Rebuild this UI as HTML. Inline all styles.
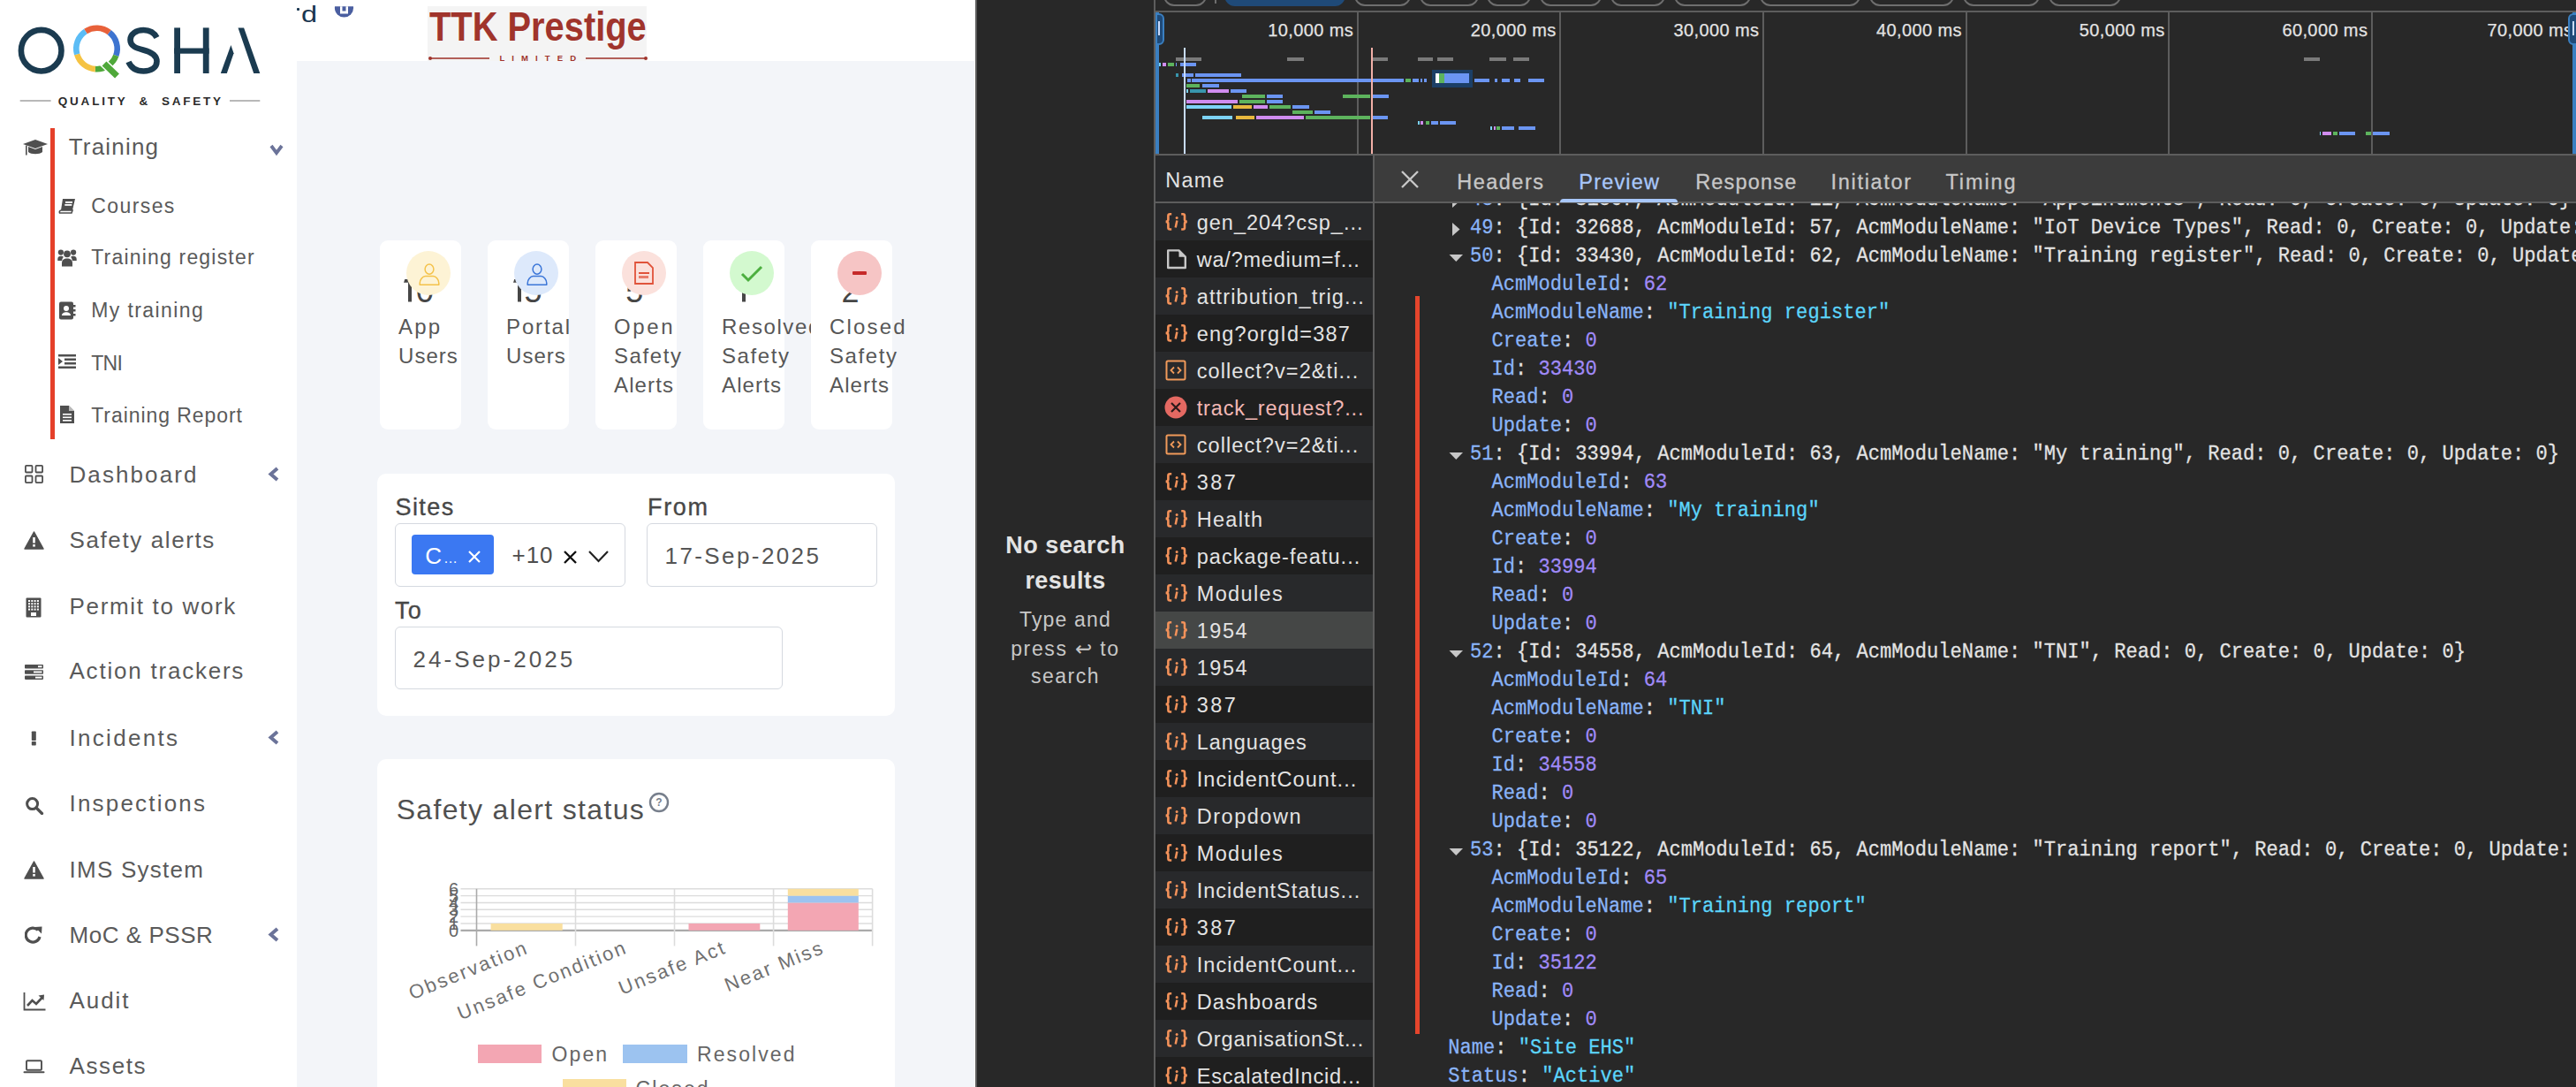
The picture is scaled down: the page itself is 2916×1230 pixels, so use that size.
<!DOCTYPE html>
<html><head><meta charset="utf-8">
<style>
*{margin:0;padding:0;box-sizing:border-box;}
html,body{width:2916px;height:1230px;overflow:hidden;background:#fff;}
body{position:relative;font-family:"Liberation Sans", sans-serif;}
.a{position:absolute;}
.t{position:absolute;white-space:nowrap;line-height:1;}
.side{color:#5a5a5a;font-size:26px;letter-spacing:1.6px;}
.sub{color:#5a5a5a;font-size:23px;letter-spacing:1.5px;}
.card{position:absolute;background:#fff;border-radius:9px;}
.mono{font-family:"Liberation Mono", monospace;font-size:22.08px;white-space:pre;line-height:1;position:absolute;color:#e3e3e3;-webkit-text-stroke:0.25px currentColor;transform:scaleY(1.07);transform-origin:0 76.65%;}
</style></head><body>

<svg class="a" style="left:0;top:0" width="336" height="130" viewBox="0 0 336 130">
<ellipse cx="46.7" cy="57.2" rx="22.8" ry="23.3" fill="none" stroke="#1b3b50" stroke-width="6.6"/>
<g fill="none" stroke-width="6.6"><path d="M 96.86 35.54 A 23.20 23.20 0 0 1 123.78 36.72" stroke="#e8613a"/><path d="M 123.78 36.72 A 23.20 23.20 0 0 1 131.30 62.93" stroke="#3d74d0"/><path d="M 131.30 62.93 A 23.20 23.20 0 0 1 107.88 78.14" stroke="#4fa83a"/><path d="M 107.88 78.14 A 23.20 23.20 0 0 1 87.20 61.39" stroke="#f5c343"/><path d="M 87.20 61.39 A 23.20 23.20 0 0 1 96.86 35.54" stroke="#5bbcf5"/></g>
<line x1="116.5" y1="70.5" x2="132.5" y2="86" stroke="#fff" stroke-width="10"/>
<line x1="118" y1="72" x2="132.5" y2="86" stroke="#4fa83a" stroke-width="7"/>
<path d="M 177.5 42.5 C 174 36, 168.5 34, 162.5 34 C 154 34, 147.5 38.5, 147.5 45 C 147.5 52, 154 54.5, 162 56.5 C 171 58.8, 177.5 62, 177.5 69.5 C 177.5 76.5, 171 80.5, 162.5 80.5 C 155 80.5, 148.5 77, 145.5 70" fill="none" stroke="#1b3b50" stroke-width="6.6"/>
<rect x="197.2" y="31.4" width="6.8" height="51.6" fill="#1b3b50"/>
<rect x="229.8" y="31.4" width="6.8" height="51.6" fill="#1b3b50"/>
<rect x="197.2" y="54.5" width="39.4" height="6.2" fill="#1b3b50"/>
<polygon points="269.5,31.4 276.1,31.4 294.3,83 287.2,83" fill="#1b3b50"/>
<polygon points="249.8,83 261.4,50.9 264.6,60.3 256.8,83" fill="#1b3b50"/>
<line x1="22.7" y1="114" x2="57.6" y2="114" stroke="#a0a0a0" stroke-width="1.6"/>
<line x1="260" y1="114" x2="294.3" y2="114" stroke="#a0a0a0" stroke-width="1.6"/>
</svg>
<div class="t" style="left:65.7px;top:107.8px;font-size:13.5px;font-weight:bold;color:#2a2a2a;letter-spacing:2.82px;">QUALITY</div>
<div class="t" style="left:157.5px;top:107.8px;font-size:13.5px;font-weight:bold;color:#2a2a2a;">&amp;</div>
<div class="t" style="left:183.0px;top:107.8px;font-size:13.5px;font-weight:bold;color:#2a2a2a;letter-spacing:2.76px;">SAFETY</div>
<div class="a" style="left:57px;top:145px;width:5px;height:352px;background:#e5402a;"></div>
<svg class="a" style="left:25.0px;top:156.0px" width="30" height="22" viewBox="0 0 30 22"><path d="M1 7 L15 2 L29 7 L15 12 Z" fill="#4f4f4f"/><path d="M7 10 L7 16 C10 19,20 19,23 16 L23 10 L15 13 Z" fill="#4f4f4f"/><rect x="4" y="8.5" width="1.6" height="11" fill="#4f4f4f"/></svg>
<div class="side t" style="left:77.7px;top:153.0px;font-size:26.0px;letter-spacing:1.20px;">Training</div>
<svg class="a" style="left:305.0px;top:162.0px" width="16" height="15" viewBox="0 0 16 15"><path d="M2 3 L8 11 L14 3" fill="none" stroke="#6b7399" stroke-width="3.8"/></svg>
<div class="sub t" style="left:103.2px;top:221.5px;font-size:23.0px;letter-spacing:1.42px;">Courses</div>
<div class="sub t" style="left:103.2px;top:280.2px;font-size:23.0px;letter-spacing:1.19px;">Training register</div>
<div class="sub t" style="left:103.2px;top:340.4px;font-size:23.0px;letter-spacing:1.41px;">My training</div>
<div class="sub t" style="left:103.2px;top:400.0px;font-size:23.0px;letter-spacing:-0.65px;">TNI</div>
<div class="sub t" style="left:103.2px;top:458.5px;font-size:23.0px;letter-spacing:0.94px;">Training Report</div>
<svg class="a" style="left:66.0px;top:224.0px" width="20" height="18" viewBox="0 0 20 18"><path d="M5 1 L19 1 L16 14 L3 14 Z" fill="#4f4f4f"/><path d="M1.5 17 L15 17 L16 14 L3 14 C1.5 14,1 16,1.5 17Z" fill="none" stroke="#4f4f4f" stroke-width="1.6"/><rect x="8" y="4" width="8" height="1.8" fill="#fff"/><rect x="7.3" y="7" width="8" height="1.8" fill="#fff"/></svg>
<svg class="a" style="left:65.0px;top:281.0px" width="22" height="21" viewBox="0 0 22 21"><circle cx="3.9" cy="4.6" r="3.1" fill="#4f4f4f"/><circle cx="18.1" cy="4.6" r="3.1" fill="#4f4f4f"/><circle cx="11" cy="6.3" r="3.9" fill="#4f4f4f"/><path d="M0.3 14 L0.3 12 C0.3 9.6,2 8.7,4 8.7 C5.4 8.7,6.4 9.1,7 9.8 C6 10.8,5.4 12,5.2 14 Z" fill="#4f4f4f"/><path d="M21.7 14 L21.7 12 C21.7 9.6,20 8.7,18 8.7 C16.6 8.7,15.6 9.1,15 9.8 C16 10.8,16.6 12,16.8 14 Z" fill="#4f4f4f"/><path d="M5 20.5 L5 16.5 C5 13,7.5 11.4,11 11.4 C14.5 11.4,17 13,17 16.5 L17 20.5 Z" fill="#4f4f4f"/></svg>
<svg class="a" style="left:66.0px;top:341.0px" width="20" height="21" viewBox="0 0 20 21"><rect x="1" y="0.5" width="16" height="20" rx="2" fill="#4f4f4f"/><rect x="17" y="4" width="2.5" height="2.5" fill="#4f4f4f"/><rect x="17" y="9" width="2.5" height="2.5" fill="#4f4f4f"/><rect x="17" y="14" width="2.5" height="2.5" fill="#4f4f4f"/><circle cx="9" cy="8" r="3" fill="#fff"/><path d="M4 16 C4 11,14 11,14 16 Z" fill="#fff"/></svg>
<svg class="a" style="left:65.0px;top:400.0px" width="22" height="18" viewBox="0 0 22 18"><rect x="1" y="1" width="20" height="2.5" fill="#4f4f4f"/><rect x="8" y="5.5" width="13" height="2.5" fill="#4f4f4f"/><rect x="8" y="10" width="13" height="2.5" fill="#4f4f4f"/><rect x="1" y="14.5" width="20" height="2.5" fill="#4f4f4f"/><path d="M1 5 L6 9 L1 13Z" fill="#4f4f4f"/></svg>
<svg class="a" style="left:67.0px;top:458.0px" width="18" height="22" viewBox="0 0 18 22"><path d="M1 1 L11 1 L17 7 L17 21 L1 21 Z" fill="#4f4f4f"/><path d="M11 1 L11 7 L17 7" fill="#fff" opacity="0.6"/><rect x="4" y="10" width="10" height="1.6" fill="#fff"/><rect x="4" y="13.5" width="10" height="1.6" fill="#fff"/><rect x="4" y="17" width="10" height="1.6" fill="#fff"/></svg>
<div class="side t" style="left:78.5px;top:524.4px;font-size:26.0px;letter-spacing:2.09px;">Dashboard</div>
<svg class="a" style="left:301.5px;top:528.4px" width="15" height="17" viewBox="0 0 15 17"><path d="M12 2 L4.5 8.5 L12 15" fill="none" stroke="#6b7399" stroke-width="4"/></svg>
<div class="side t" style="left:78.5px;top:598.2px;font-size:26.0px;letter-spacing:1.61px;">Safety alerts</div>
<div class="side t" style="left:78.5px;top:672.6px;font-size:26.0px;letter-spacing:1.67px;">Permit to work</div>
<div class="side t" style="left:78.5px;top:746.3px;font-size:26.0px;letter-spacing:1.78px;">Action trackers</div>
<div class="side t" style="left:78.5px;top:821.8px;font-size:26.0px;letter-spacing:2.30px;">Incidents</div>
<svg class="a" style="left:301.5px;top:825.8px" width="15" height="17" viewBox="0 0 15 17"><path d="M12 2 L4.5 8.5 L12 15" fill="none" stroke="#6b7399" stroke-width="4"/></svg>
<div class="side t" style="left:78.5px;top:895.8px;font-size:26.0px;letter-spacing:2.20px;">Inspections</div>
<div class="side t" style="left:78.5px;top:970.5px;font-size:26.0px;letter-spacing:1.26px;">IMS System</div>
<div class="side t" style="left:78.5px;top:1045.0px;font-size:26.0px;letter-spacing:0.54px;">MoC &amp; PSSR</div>
<svg class="a" style="left:301.5px;top:1049.0px" width="15" height="17" viewBox="0 0 15 17"><path d="M12 2 L4.5 8.5 L12 15" fill="none" stroke="#6b7399" stroke-width="4"/></svg>
<div class="side t" style="left:78.5px;top:1118.9px;font-size:26.0px;letter-spacing:1.95px;">Audit</div>
<div class="side t" style="left:78.5px;top:1193.2px;font-size:26.0px;letter-spacing:1.60px;">Assets</div>
<svg class="a" style="left:27.0px;top:525.0px" width="23" height="23" viewBox="0 0 23 23"><g fill="none" stroke="#4f4f4f" stroke-width="1.8"><rect x="1.9" y="1.9" width="7.6" height="7.6" rx="1"/><rect x="13.5" y="1.9" width="7.6" height="7.6" rx="1"/><rect x="1.9" y="13.5" width="7.6" height="7.6" rx="1"/><rect x="13.5" y="13.5" width="7.6" height="7.6" rx="1"/></g></svg>
<svg class="a" style="left:27.0px;top:600.5px" width="23" height="21" viewBox="0 0 23 21"><path d="M11.5 1 L22 20 L1 20 Z" fill="#4f4f4f" stroke="#4f4f4f" stroke-width="1.5" stroke-linejoin="round"/><rect x="10.2" y="7" width="2.6" height="6.5" fill="#fff"/><rect x="10.2" y="15" width="2.6" height="2.6" fill="#fff"/></svg>
<svg class="a" style="left:29.0px;top:676.0px" width="18" height="23" viewBox="0 0 18 23"><rect x="0.5" y="0.5" width="17" height="22" rx="1" fill="#4f4f4f"/><rect x="3" y="3" width="2" height="2" fill="#fff"/><rect x="3" y="6.2" width="2" height="2" fill="#fff"/><rect x="3" y="9.4" width="2" height="2" fill="#fff"/><rect x="3" y="12.6" width="2" height="2" fill="#fff"/><rect x="6.3" y="3" width="2" height="2" fill="#fff"/><rect x="6.3" y="6.2" width="2" height="2" fill="#fff"/><rect x="6.3" y="9.4" width="2" height="2" fill="#fff"/><rect x="6.3" y="12.6" width="2" height="2" fill="#fff"/><rect x="9.6" y="3" width="2" height="2" fill="#fff"/><rect x="9.6" y="6.2" width="2" height="2" fill="#fff"/><rect x="9.6" y="9.4" width="2" height="2" fill="#fff"/><rect x="9.6" y="12.6" width="2" height="2" fill="#fff"/><rect x="12.9" y="3" width="2" height="2" fill="#fff"/><rect x="12.9" y="6.2" width="2" height="2" fill="#fff"/><rect x="12.9" y="9.4" width="2" height="2" fill="#fff"/><rect x="12.9" y="12.6" width="2" height="2" fill="#fff"/><rect x="6" y="17" width="6" height="4" fill="#fff"/></svg>
<svg class="a" style="left:27.0px;top:751.0px" width="23" height="19" viewBox="0 0 23 19"><rect x="1" y="1" width="21" height="4.5" rx="0.8" fill="#4f4f4f"/><rect x="1" y="7.2" width="21" height="4.5" rx="0.8" fill="#4f4f4f"/><rect x="1" y="13.4" width="21" height="4.5" rx="0.8" fill="#4f4f4f"/><rect x="16" y="2.3" width="4.5" height="1.9" fill="#fff"/><rect x="11" y="8.5" width="9.5" height="1.9" fill="#fff"/><rect x="13" y="14.7" width="7.5" height="1.9" fill="#fff"/></svg>
<svg class="a" style="left:35.0px;top:827.0px" width="7" height="17" viewBox="0 0 7 17"><rect x="0.8" y="0.5" width="5" height="10.5" rx="0.8" fill="#4f4f4f"/><rect x="0.8" y="12" width="5" height="4.5" rx="0.8" fill="#4f4f4f"/></svg>
<svg class="a" style="left:28.0px;top:901.0px" width="22" height="21" viewBox="0 0 22 21"><circle cx="8.6" cy="8.6" r="6" fill="none" stroke="#4f4f4f" stroke-width="3"/><line x1="13" y1="13" x2="19.5" y2="19.5" stroke="#4f4f4f" stroke-width="3.2" stroke-linecap="round"/></svg>
<svg class="a" style="left:27.0px;top:973.5px" width="23" height="21" viewBox="0 0 23 21"><path d="M11.5 1 L22 20 L1 20 Z" fill="#4f4f4f" stroke="#4f4f4f" stroke-width="1.5" stroke-linejoin="round"/><rect x="10.2" y="7" width="2.6" height="6.5" fill="#fff"/><rect x="10.2" y="15" width="2.6" height="2.6" fill="#fff"/></svg>
<svg class="a" style="left:28.0px;top:1047.0px" width="21" height="23" viewBox="0 0 21 23"><path d="M17 13 A8 8 0 1 1 15 5.5" fill="none" stroke="#4f4f4f" stroke-width="3.2"/><path d="M11.5 2 L19.5 1.5 L19 9.5 Z" fill="#4f4f4f"/></svg>
<svg class="a" style="left:26.0px;top:1123.0px" width="26" height="21" viewBox="0 0 26 21"><path d="M1.5 0 L1.5 19.5 L25.5 19.5" fill="none" stroke="#4f4f4f" stroke-width="1.8"/><path d="M5 15 L10.5 9 L15 13 L22 5.5" fill="none" stroke="#4f4f4f" stroke-width="2.6"/><path d="M17.5 3.5 L24 2.5 L23.5 9 Z" fill="#4f4f4f"/></svg>
<svg class="a" style="left:26.0px;top:1199.0px" width="25" height="16" viewBox="0 0 25 16"><rect x="4" y="1.2" width="17" height="10.5" rx="1" fill="none" stroke="#4f4f4f" stroke-width="1.9"/><rect x="0.5" y="13.2" width="24" height="2" rx="1" fill="#4f4f4f"/></svg>
<div class="a" style="left:336px;top:0;width:767px;height:69px;background:#fff;"></div>
<div class="a" style="left:336px;top:69px;width:767px;height:1161px;background:#f3f5f9;"></div>
<div class="a" style="left:336px;top:9px;width:2.5px;height:3px;background:#1a3650;border-radius:1px;"></div>
<div class="t" style="left:340.5px;top:4.1px;font-size:25px;color:#1a3650;transform-origin:0 0;transform:scaleX(1.3);">d</div>
<svg class="a" style="left:376.0px;top:0.0px" width="28" height="22" viewBox="0 0 28 22"><defs><clipPath id="hc"><rect x="0" y="7.3" width="28" height="15"/></clipPath></defs><g clip-path="url(#hc)"><circle cx="13.5" cy="9" r="10.6" fill="#4a5ea0"/><path d="M9 7 L9 15.5 L18 15.5 L18 7 L15.5 7 L15.5 12.5 L11.5 12.5 L11.5 7 Z" fill="#fff"/></g></svg>
<div class="a" style="left:484px;top:7px;width:248px;height:62px;background:#f4f4f4;"></div>
<div class="t" style="left:486px;top:6.8px;font-size:46px;font-weight:bold;color:#a0342c;transform-origin:0 0;transform:scaleX(0.866);">TTK Prestige</div>
<div class="a" style="left:486.5px;top:65.3px;width:67px;height:1.4px;background:#b25f58;"></div>
<div class="a" style="left:662.6px;top:65.3px;width:68px;height:1.4px;background:#b25f58;"></div>
<div class="a" style="left:485px;top:64px;width:4px;height:4px;border-radius:2px;background:#a0342c;"></div>
<div class="a" style="left:728.5px;top:64px;width:4px;height:4px;border-radius:2px;background:#a0342c;"></div>
<div class="t" style="left:565.4px;top:61.4px;font-size:9.5px;font-weight:bold;color:#a0342c;letter-spacing:8.1px;">LIMITED</div>
<div class="card" style="left:430px;top:272px;width:92px;height:214px;z-index:10;"></div>
<svg class="a" style="left:457.0px;top:316.4px;z-index:10" width="10" height="26" viewBox="0 0 10 26"><path d="M0 4 L1.2 0 L9 0 L9 25.4 L5 25.4 L5 3.8 L0.6 3.8 Z" fill="#464646"/></svg>
<div class="t" style="left:471.0px;top:311.8px;font-size:36px;color:#464646;z-index:10;">0</div>
<div class="a" style="left:459.7px;top:283.6px;width:50px;height:50px;border-radius:25px;background:#fdf3d5;z-index:11;"></div>
<svg class="a" style="z-index:11;left:473.7px;top:297.8px" width="24" height="26" viewBox="0 0 24 26"><ellipse cx="12" cy="6.6" rx="4.9" ry="5.6" fill="none" stroke="#f4c24a" stroke-width="1.5"/><path d="M1.2 24.2 L1.2 22.5 C1.2 18.5, 4.5 14.6, 7.5 14.6 L16.5 14.6 C19.5 14.6, 22.8 18.5, 22.8 22.5 L22.8 24.2 Z" fill="none" stroke="#f4c24a" stroke-width="1.5" stroke-linejoin="round"/></svg>
<div class="t" style="left:451.0px;top:358.3px;font-size:24.0px;color:#575757;letter-spacing:2.20px;z-index:10;">App</div>
<div class="t" style="left:451.0px;top:391.3px;font-size:24.0px;color:#575757;letter-spacing:1.05px;z-index:10;">Users</div>
<div class="card" style="left:552px;top:272px;width:92px;height:214px;z-index:12;"></div>
<svg class="a" style="left:581.2px;top:316.4px;z-index:12" width="10" height="26" viewBox="0 0 10 26"><path d="M0 4 L1.2 0 L9 0 L9 25.4 L5 25.4 L5 3.8 L0.6 3.8 Z" fill="#464646"/></svg>
<div class="t" style="left:593.5px;top:311.8px;font-size:36px;color:#464646;z-index:12;">5</div>
<div class="a" style="left:581.7px;top:283.6px;width:50px;height:50px;border-radius:25px;background:#dde9fb;z-index:13;"></div>
<svg class="a" style="z-index:13;left:595.7px;top:297.8px" width="24" height="26" viewBox="0 0 24 26"><ellipse cx="12" cy="6.6" rx="4.9" ry="5.6" fill="none" stroke="#3b76d8" stroke-width="1.5"/><path d="M1.2 24.2 L1.2 22.5 C1.2 18.5, 4.5 14.6, 7.5 14.6 L16.5 14.6 C19.5 14.6, 22.8 18.5, 22.8 22.5 L22.8 24.2 Z" fill="none" stroke="#3b76d8" stroke-width="1.5" stroke-linejoin="round"/></svg>
<div class="t" style="left:573.0px;top:358.3px;font-size:24.0px;color:#575757;letter-spacing:1.88px;z-index:12;">Portal</div>
<div class="t" style="left:573.0px;top:391.3px;font-size:24.0px;color:#575757;letter-spacing:1.05px;z-index:12;">Users</div>
<div class="card" style="left:674px;top:272px;width:92px;height:214px;z-index:14;"></div>
<div class="t" style="left:708.3px;top:311.8px;font-size:36px;color:#464646;z-index:14;">5</div>
<div class="a" style="left:703.7px;top:283.6px;width:50px;height:50px;border-radius:25px;background:#fbe1dc;z-index:15;"></div>
<svg class="a" style="z-index:15;left:717.7px;top:296.1px" width="22" height="26" viewBox="0 0 22 26"><path d="M1 1 L15 1 L21 7 L21 25 L1 25 Z" fill="none" stroke="#e0533a" stroke-width="1.8"/><rect x="5" y="12" width="12" height="2" fill="#e0533a"/><rect x="5" y="16" width="11" height="3" fill="#e0533a" opacity="0.7"/></svg>
<div class="t" style="left:695.0px;top:358.3px;font-size:24.0px;color:#575757;letter-spacing:2.67px;z-index:14;">Open</div>
<div class="t" style="left:695.0px;top:391.3px;font-size:24.0px;color:#575757;letter-spacing:1.60px;z-index:14;">Safety</div>
<div class="t" style="left:695.0px;top:424.3px;font-size:24.0px;color:#575757;letter-spacing:1.12px;z-index:14;">Alerts</div>
<div class="card" style="left:796px;top:272px;width:92px;height:214px;z-index:16;"></div>
<svg class="a" style="left:834.6px;top:316.4px;z-index:16" width="10" height="26" viewBox="0 0 10 26"><path d="M0 4 L1.2 0 L9 0 L9 25.4 L5 25.4 L5 3.8 L0.6 3.8 Z" fill="#464646"/></svg>
<div class="a" style="left:825.7px;top:283.6px;width:50px;height:50px;border-radius:25px;background:#d3f9cf;z-index:17;"></div>
<svg class="a" style="z-index:17;left:837.7px;top:296.6px" width="26" height="24" viewBox="0 0 26 24"><path d="M2 13 L9 20 L24 5" fill="none" stroke="#4caf3f" stroke-width="3"/></svg>
<div class="t" style="left:817.0px;top:358.3px;font-size:24.0px;color:#575757;letter-spacing:1.60px;z-index:16;">Resolved</div>
<div class="t" style="left:817.0px;top:391.3px;font-size:24.0px;color:#575757;letter-spacing:1.60px;z-index:16;">Safety</div>
<div class="t" style="left:817.0px;top:424.3px;font-size:24.0px;color:#575757;letter-spacing:1.12px;z-index:16;">Alerts</div>
<div class="card" style="left:918px;top:272px;width:92px;height:214px;z-index:18;"></div>
<div class="t" style="left:952.4px;top:311.8px;font-size:36px;color:#464646;z-index:18;">2</div>
<div class="a" style="left:947.7px;top:283.6px;width:50px;height:50px;border-radius:25px;background:#f6c5c5;z-index:19;"></div>
<svg class="a" style="z-index:19;left:963.7px;top:306.1px" width="18" height="6" viewBox="0 0 18 6"><rect x="1" y="1" width="16" height="4" rx="1" fill="#c62a2a"/></svg>
<div class="t" style="left:939.0px;top:358.3px;font-size:24.0px;color:#575757;letter-spacing:2.16px;z-index:18;">Closed</div>
<div class="t" style="left:939.0px;top:391.3px;font-size:24.0px;color:#575757;letter-spacing:1.60px;z-index:18;">Safety</div>
<div class="t" style="left:939.0px;top:424.3px;font-size:24.0px;color:#575757;letter-spacing:1.12px;z-index:18;">Alerts</div>
<div class="card" style="left:427px;top:536px;width:586px;height:274px;border-radius:10px;"></div>
<div class="t" style="left:447.6px;top:561.1px;font-size:27.0px;color:#474747;-webkit-text-stroke:0.35px #474747;letter-spacing:1.38px;">Sites</div>
<div class="t" style="left:733.0px;top:561.1px;font-size:27.0px;color:#474747;-webkit-text-stroke:0.35px #474747;letter-spacing:1.67px;">From</div>
<div class="t" style="left:447.0px;top:678.1px;font-size:27.0px;color:#474747;-webkit-text-stroke:0.35px #474747;letter-spacing:1.20px;">To</div>
<div class="a" style="left:447px;top:592px;width:261px;height:72px;border:1.5px solid #d5d9e0;border-radius:6px;background:#fff;"></div>
<div class="a" style="left:732px;top:592px;width:261px;height:72px;border:1.5px solid #d5d9e0;border-radius:6px;background:#fff;"></div>
<div class="a" style="left:447px;top:709px;width:439px;height:71px;border:1.5px solid #d5d9e0;border-radius:6px;background:#fff;"></div>
<div class="a" style="left:466px;top:605px;width:93px;height:45px;background:#3b78f2;border-radius:4px;"></div>
<div class="t" style="left:481.3px;top:615.5px;font-size:26.0px;color:#fff;">C</div>
<div class="t" style="left:502.0px;top:624.0px;font-size:16.0px;color:#fff;">…</div>
<svg class="a" style="left:529.0px;top:622.0px" width="16" height="16" viewBox="0 0 16 16"><path d="M2 2 L14 14 M14 2 L2 14" stroke="#fff" stroke-width="2.2"/></svg>
<div class="t" style="left:579.5px;top:615.3px;font-size:26.0px;color:#4d4d4d;letter-spacing:0.95px;">+10</div>
<svg class="a" style="left:637.0px;top:622.0px" width="17" height="17" viewBox="0 0 17 17"><path d="M2 2 L15 15 M15 2 L2 15" stroke="#111" stroke-width="2.4"/></svg>
<svg class="a" style="left:665.0px;top:622.0px" width="25" height="16" viewBox="0 0 25 16"><path d="M2 2 L12.5 13 L23 2" fill="none" stroke="#222" stroke-width="2.2"/></svg>
<div class="t" style="left:752.6px;top:616.0px;font-size:26.0px;color:#555;letter-spacing:2.40px;">17-Sep-2025</div>
<div class="t" style="left:467.5px;top:733.0px;font-size:26.0px;color:#555;letter-spacing:3.04px;">24-Sep-2025</div>
<div class="card" style="left:427px;top:859px;width:586px;height:400px;border-radius:10px;"></div>
<div class="t" style="left:448.7px;top:900.1px;font-size:32.0px;color:#505050;letter-spacing:1.33px;">Safety alert status</div>
<svg class="a" style="left:734.0px;top:896.0px" width="24" height="24" viewBox="0 0 24 24"><circle cx="12" cy="12" r="10" fill="none" stroke="#777f8c" stroke-width="2.4"/><text x="12" y="16.2" font-size="12" font-weight="bold" text-anchor="middle" fill="#777f8c" font-family="Liberation Sans">?</text></svg>
<svg class="a" style="left:420.0px;top:990.0px" width="600" height="240" viewBox="0 0 600 240"><g transform="translate(-420,-990)"><line x1="521.5" y1="1005.8" x2="987.6" y2="1005.8" stroke="#dcdcdc" stroke-width="1.4"/><line x1="521.5" y1="1013.6" x2="987.6" y2="1013.6" stroke="#dcdcdc" stroke-width="1.4"/><line x1="521.5" y1="1021.5" x2="987.6" y2="1021.5" stroke="#dcdcdc" stroke-width="1.4"/><line x1="521.5" y1="1029.3" x2="987.6" y2="1029.3" stroke="#dcdcdc" stroke-width="1.4"/><line x1="521.5" y1="1037.1" x2="987.6" y2="1037.1" stroke="#dcdcdc" stroke-width="1.4"/><line x1="521.5" y1="1045.0" x2="987.6" y2="1045.0" stroke="#dcdcdc" stroke-width="1.4"/><line x1="521.5" y1="1052.8" x2="987.6" y2="1052.8" stroke="#aaa" stroke-width="2.2"/><line x1="539.5" y1="1005.8" x2="539.5" y2="1070.4" stroke="#aaa" stroke-width="1.6"/><line x1="651.5" y1="1005.8" x2="651.5" y2="1070.4" stroke="#dcdcdc" stroke-width="1.6"/><line x1="763.5" y1="1005.8" x2="763.5" y2="1070.4" stroke="#dcdcdc" stroke-width="1.6"/><line x1="875.6" y1="1005.8" x2="875.6" y2="1070.4" stroke="#dcdcdc" stroke-width="1.6"/><line x1="987.6" y1="1005.8" x2="987.6" y2="1070.4" stroke="#dcdcdc" stroke-width="1.6"/><rect x="555.6" y="1045.0" width="81.1" height="7.8" fill="#f9df9f"/><rect x="779.5" y="1045.0" width="80.8" height="7.8" fill="#f3a6b3"/><rect x="891.8" y="1021.5" width="80.0" height="31.3" fill="#f3a6b3"/><rect x="891.8" y="1013.6" width="80.0" height="7.8" fill="#9cc3f0"/><rect x="891.8" y="1005.8" width="80.0" height="7.8" fill="#f9df9f"/><text x="519.0" y="1059.8" font-size="20" fill="#666" text-anchor="end" font-family="Liberation Sans">0</text><text x="519.0" y="1052.0" font-size="20" fill="#666" text-anchor="end" font-family="Liberation Sans">1</text><text x="519.0" y="1044.1" font-size="20" fill="#666" text-anchor="end" font-family="Liberation Sans">2</text><text x="519.0" y="1036.3" font-size="20" fill="#666" text-anchor="end" font-family="Liberation Sans">3</text><text x="519.0" y="1028.5" font-size="20" fill="#666" text-anchor="end" font-family="Liberation Sans">4</text><text x="519.0" y="1020.6" font-size="20" fill="#666" text-anchor="end" font-family="Liberation Sans">5</text><text x="519.0" y="1012.8" font-size="20" fill="#666" text-anchor="end" font-family="Liberation Sans">6</text></g></svg>
<div class="t" style="left:592.5px;top:1061.0px;font-size:22px;color:#707070;letter-spacing:2.27px;transform-origin:100% 0;transform:translateX(-100%) rotate(-22deg);">Observation</div>
<div class="t" style="left:704.8px;top:1061.0px;font-size:22px;color:#707070;letter-spacing:2.27px;transform-origin:100% 0;transform:translateX(-100%) rotate(-22deg);">Unsafe Condition</div>
<div class="t" style="left:816.5px;top:1061.0px;font-size:22px;color:#707070;letter-spacing:2.27px;transform-origin:100% 0;transform:translateX(-100%) rotate(-22deg);">Unsafe Act</div>
<div class="t" style="left:928.1px;top:1061.0px;font-size:22px;color:#707070;letter-spacing:2.27px;transform-origin:100% 0;transform:translateX(-100%) rotate(-22deg);">Near Miss</div>
<div class="a" style="left:541px;top:1181.6px;width:72px;height:21.5px;background:#f3a6b3;"></div>
<div class="t" style="left:624.5px;top:1181.5px;font-size:23.0px;color:#666;letter-spacing:2.10px;">Open</div>
<div class="a" style="left:705px;top:1181.6px;width:72.7px;height:21.5px;background:#9cc3f0;"></div>
<div class="t" style="left:789.0px;top:1181.5px;font-size:23.0px;color:#666;letter-spacing:2.09px;">Resolved</div>
<div class="a" style="left:636.7px;top:1221px;width:72px;height:21.5px;background:#f9df9f;"></div>
<div class="t" style="left:719.6px;top:1220.5px;font-size:23.0px;color:#666;letter-spacing:2.09px;">Closed</div>
<div class="a" style="left:1103px;top:0;width:1px;height:1230px;background:#fff;"></div>
<div class="a" style="left:1104px;top:0;width:2px;height:1230px;background:#5c5c5c;"></div>
<div class="a" style="left:1106px;top:0;width:1810px;height:1230px;background:#282828;"></div>
<div class="a" style="left:1306px;top:0;width:2px;height:1230px;background:#5d5d5d;"></div>
<div class="t" style="left:1106px;top:604.1px;width:200px;text-align:center;font-size:27px;font-weight:bold;color:#e3e3e3;letter-spacing:0.57px;">No search</div>
<div class="t" style="left:1106px;top:644.1px;width:200px;text-align:center;font-size:27px;font-weight:bold;color:#e3e3e3;letter-spacing:0.38px;">results</div>
<div class="t" style="left:1106px;top:690.1px;width:200px;text-align:center;font-size:23px;color:#c7c7c7;letter-spacing:1.17px;">Type and</div>
<div class="t" style="left:1106px;top:722.5px;width:200px;text-align:center;font-size:23px;color:#c7c7c7;letter-spacing:1.64px;">press &#x21A9; to</div>
<div class="t" style="left:1106px;top:753.8px;width:200px;text-align:center;font-size:23px;color:#c7c7c7;letter-spacing:1.48px;">search</div>
<div class="a" style="left:1308px;top:12px;width:1608px;height:2px;background:#5d5d5d;"></div>
<div class="a" style="left:1316.5px;top:-30px;width:49.5px;height:37px;border-radius:12px;border:2px solid #6e6e6e;"></div>
<div class="a" style="left:1386.0px;top:-30px;width:136.8px;height:37px;border-radius:12px;background:#1f4a78;"></div>
<div class="a" style="left:1533.0px;top:-30px;width:63.6px;height:37px;border-radius:12px;border:2px solid #6e6e6e;"></div>
<div class="a" style="left:1606.7px;top:-30px;width:66.9px;height:37px;border-radius:12px;border:2px solid #6e6e6e;"></div>
<div class="a" style="left:1683.0px;top:-30px;width:49.8px;height:37px;border-radius:12px;border:2px solid #6e6e6e;"></div>
<div class="a" style="left:1742.5px;top:-30px;width:70.1px;height:37px;border-radius:12px;border:2px solid #6e6e6e;"></div>
<div class="a" style="left:1822.8px;top:-30px;width:61.9px;height:37px;border-radius:12px;border:2px solid #6e6e6e;"></div>
<div class="a" style="left:1894.8px;top:-30px;width:87.2px;height:37px;border-radius:12px;border:2px solid #6e6e6e;"></div>
<div class="a" style="left:1991.7px;top:-30px;width:114.1px;height:37px;border-radius:12px;border:2px solid #6e6e6e;"></div>
<div class="a" style="left:2116.0px;top:-30px;width:95.9px;height:37px;border-radius:12px;border:2px solid #6e6e6e;"></div>
<div class="a" style="left:2221.8px;top:-30px;width:86.9px;height:37px;border-radius:12px;border:2px solid #6e6e6e;"></div>
<div class="a" style="left:2318.6px;top:-30px;width:82.4px;height:37px;border-radius:12px;border:2px solid #6e6e6e;"></div>
<div class="a" style="left:1375px;top:0;width:2px;height:4px;background:#6e6e6e;"></div>
<div class="a" style="left:1535.6px;top:14px;width:2px;height:161px;background:#5d5d5d;"></div>
<div class="t" style="left:1532.1px;top:23.9px;font-size:20.0px;color:#e3e3e3;-webkit-text-stroke:0.25px #e3e3e3;letter-spacing:0.39px;transform:translateX(-100%);">10,000 ms</div>
<div class="a" style="left:1765.2px;top:14px;width:2px;height:161px;background:#5d5d5d;"></div>
<div class="t" style="left:1761.7px;top:23.9px;font-size:20.0px;color:#e3e3e3;-webkit-text-stroke:0.25px #e3e3e3;letter-spacing:0.39px;transform:translateX(-100%);">20,000 ms</div>
<div class="a" style="left:1994.9px;top:14px;width:2px;height:161px;background:#5d5d5d;"></div>
<div class="t" style="left:1991.4px;top:23.9px;font-size:20.0px;color:#e3e3e3;-webkit-text-stroke:0.25px #e3e3e3;letter-spacing:0.39px;transform:translateX(-100%);">30,000 ms</div>
<div class="a" style="left:2224.5px;top:14px;width:2px;height:161px;background:#5d5d5d;"></div>
<div class="t" style="left:2221.0px;top:23.9px;font-size:20.0px;color:#e3e3e3;-webkit-text-stroke:0.25px #e3e3e3;letter-spacing:0.39px;transform:translateX(-100%);">40,000 ms</div>
<div class="a" style="left:2454.2px;top:14px;width:2px;height:161px;background:#5d5d5d;"></div>
<div class="t" style="left:2450.7px;top:23.9px;font-size:20.0px;color:#e3e3e3;-webkit-text-stroke:0.25px #e3e3e3;letter-spacing:0.39px;transform:translateX(-100%);">50,000 ms</div>
<div class="a" style="left:2683.8px;top:14px;width:2px;height:161px;background:#5d5d5d;"></div>
<div class="t" style="left:2680.3px;top:23.9px;font-size:20.0px;color:#e3e3e3;-webkit-text-stroke:0.25px #e3e3e3;letter-spacing:0.39px;transform:translateX(-100%);">60,000 ms</div>
<div class="t" style="left:2912.5px;top:23.9px;font-size:20.0px;color:#e3e3e3;-webkit-text-stroke:0.25px #e3e3e3;letter-spacing:0.39px;transform:translateX(-100%);">70,000 ms</div>
<div class="a" style="left:1331.0px;top:65.0px;width:29.0px;height:4px;background:#7a7a7a;"></div>
<div class="a" style="left:1456.8px;top:65.0px;width:18.9px;height:4px;background:#7a7a7a;"></div>
<div class="a" style="left:1553.9px;top:65.0px;width:17.5px;height:4px;background:#7a7a7a;"></div>
<div class="a" style="left:1604.7px;top:65.0px;width:17.1px;height:4px;background:#7a7a7a;"></div>
<div class="a" style="left:1627.0px;top:65.0px;width:18.0px;height:4px;background:#7a7a7a;"></div>
<div class="a" style="left:1686.3px;top:65.0px;width:18.7px;height:4px;background:#7a7a7a;"></div>
<div class="a" style="left:1712.9px;top:65.0px;width:18.4px;height:4px;background:#7a7a7a;"></div>
<div class="a" style="left:2608.0px;top:65.0px;width:18.0px;height:4px;background:#7a7a7a;"></div>
<div class="a" style="left:1312.0px;top:71.0px;width:2.0px;height:4px;background:#7dd3f8;"></div>
<div class="a" style="left:1316.0px;top:71.0px;width:3.8px;height:4px;background:#d08cf0;"></div>
<div class="a" style="left:1321.7px;top:71.0px;width:7.0px;height:4px;background:#5db35d;"></div>
<div class="a" style="left:1330.7px;top:71.0px;width:1.5px;height:4px;background:#6b95f2;"></div>
<div class="a" style="left:1336.0px;top:71.0px;width:18.3px;height:4px;background:#6b95f2;"></div>
<div class="a" style="left:1331.0px;top:82.8px;width:3.0px;height:4px;background:#3896ad;"></div>
<div class="a" style="left:1337.8px;top:82.8px;width:13.2px;height:4px;background:#6b95f2;"></div>
<div class="a" style="left:1352.8px;top:82.8px;width:52.0px;height:4px;background:#6b95f2;"></div>
<div class="a" style="left:1343.7px;top:88.8px;width:3.9px;height:4px;background:#6b95f2;"></div>
<div class="a" style="left:1349.0px;top:88.8px;width:240.2px;height:4px;background:#6b95f2;"></div>
<div class="a" style="left:1590.8px;top:88.8px;width:6.2px;height:4px;background:#5db35d;"></div>
<div class="a" style="left:1598.5px;top:88.8px;width:7.8px;height:4px;background:#6b95f2;"></div>
<div class="a" style="left:1608.0px;top:88.8px;width:2.0px;height:4px;background:#6b95f2;"></div>
<div class="a" style="left:1612.0px;top:88.8px;width:3.0px;height:4px;background:#6b95f2;"></div>
<div class="a" style="left:1668.8px;top:88.8px;width:17.5px;height:4px;background:#6b95f2;"></div>
<div class="a" style="left:1692.0px;top:88.8px;width:3.0px;height:4px;background:#6b95f2;"></div>
<div class="a" style="left:1699.8px;top:88.8px;width:9.7px;height:4px;background:#6b95f2;"></div>
<div class="a" style="left:1714.0px;top:88.8px;width:7.0px;height:4px;background:#6b95f2;"></div>
<div class="a" style="left:1730.0px;top:88.8px;width:18.4px;height:4px;background:#6b95f2;"></div>
<div class="a" style="left:1342.7px;top:94.9px;width:15.5px;height:4px;background:#5db35d;"></div>
<div class="a" style="left:1361.1px;top:94.9px;width:18.5px;height:4px;background:#6b95f2;"></div>
<div class="a" style="left:1342.7px;top:100.9px;width:1.9px;height:4px;background:#7dd3f8;"></div>
<div class="a" style="left:1346.6px;top:100.9px;width:18.4px;height:4px;background:#3896ad;"></div>
<div class="a" style="left:1367.0px;top:100.9px;width:23.6px;height:4px;background:#d08cf0;"></div>
<div class="a" style="left:1392.8px;top:100.9px;width:18.2px;height:4px;background:#6b95f2;"></div>
<div class="a" style="left:1405.8px;top:106.9px;width:26.2px;height:4px;background:#5db35d;"></div>
<div class="a" style="left:1433.5px;top:106.9px;width:18.5px;height:4px;background:#6b95f2;"></div>
<div class="a" style="left:1520.3px;top:106.9px;width:31.1px;height:4px;background:#5db35d;"></div>
<div class="a" style="left:1553.3px;top:106.9px;width:18.4px;height:4px;background:#6b95f2;"></div>
<div class="a" style="left:1342.7px;top:112.9px;width:58.3px;height:4px;background:#d08cf0;"></div>
<div class="a" style="left:1402.9px;top:112.9px;width:29.5px;height:4px;background:#5db35d;"></div>
<div class="a" style="left:1434.3px;top:112.9px;width:18.1px;height:4px;background:#6b95f2;"></div>
<div class="a" style="left:1342.7px;top:118.9px;width:51.8px;height:4px;background:#7dd3f8;"></div>
<div class="a" style="left:1396.0px;top:118.9px;width:21.4px;height:4px;background:#e8b83e;"></div>
<div class="a" style="left:1419.2px;top:118.9px;width:15.7px;height:4px;background:#d08cf0;"></div>
<div class="a" style="left:1437.0px;top:118.9px;width:24.0px;height:4px;background:#5db35d;"></div>
<div class="a" style="left:1463.0px;top:118.9px;width:18.5px;height:4px;background:#6b95f2;"></div>
<div class="a" style="left:1463.0px;top:124.9px;width:23.3px;height:4px;background:#5db35d;"></div>
<div class="a" style="left:1487.9px;top:124.9px;width:18.4px;height:4px;background:#6b95f2;"></div>
<div class="a" style="left:1361.0px;top:131.0px;width:33.7px;height:4px;background:#7dd3f8;"></div>
<div class="a" style="left:1399.0px;top:131.0px;width:21.0px;height:4px;background:#e8b83e;"></div>
<div class="a" style="left:1421.7px;top:131.0px;width:54.0px;height:4px;background:#d08cf0;"></div>
<div class="a" style="left:1477.6px;top:131.0px;width:73.4px;height:4px;background:#5db35d;"></div>
<div class="a" style="left:1553.3px;top:131.0px;width:18.1px;height:4px;background:#6b95f2;"></div>
<div class="a" style="left:1605.0px;top:137.0px;width:1.5px;height:4px;background:#7dd3f8;"></div>
<div class="a" style="left:1607.7px;top:137.0px;width:3.3px;height:4px;background:#d08cf0;"></div>
<div class="a" style="left:1613.5px;top:137.0px;width:4.8px;height:4px;background:#5db35d;"></div>
<div class="a" style="left:1620.3px;top:137.0px;width:7.7px;height:4px;background:#6b95f2;"></div>
<div class="a" style="left:1630.0px;top:137.0px;width:18.4px;height:4px;background:#6b95f2;"></div>
<div class="a" style="left:1686.6px;top:143.0px;width:2.4px;height:4px;background:#7dd3f8;"></div>
<div class="a" style="left:1690.5px;top:143.0px;width:2.0px;height:4px;background:#d08cf0;"></div>
<div class="a" style="left:1694.0px;top:143.0px;width:4.3px;height:4px;background:#5db35d;"></div>
<div class="a" style="left:1699.8px;top:143.0px;width:14.6px;height:4px;background:#6b95f2;"></div>
<div class="a" style="left:1719.3px;top:143.0px;width:18.4px;height:4px;background:#6b95f2;"></div>
<div class="a" style="left:2626.0px;top:149.0px;width:1.0px;height:4px;background:#7dd3f8;"></div>
<div class="a" style="left:2628.5px;top:149.0px;width:10.5px;height:4px;background:#d08cf0;"></div>
<div class="a" style="left:2641.0px;top:149.0px;width:5.0px;height:4px;background:#5db35d;"></div>
<div class="a" style="left:2647.7px;top:149.0px;width:18.3px;height:4px;background:#6b95f2;"></div>
<div class="a" style="left:2677.6px;top:149.0px;width:6.4px;height:4px;background:#5db35d;"></div>
<div class="a" style="left:2686.0px;top:149.0px;width:18.5px;height:4px;background:#6b95f2;"></div>
<div class="a" style="left:1621.2px;top:79.2px;width:45.6px;height:19.4px;background:#1c3f66;"></div>
<div class="a" style="left:1625px;top:83px;width:4px;height:11px;background:#fff;"></div>
<div class="a" style="left:1629px;top:83px;width:5.8px;height:11px;background:#5db35d;"></div>
<div class="a" style="left:1634.8px;top:83px;width:28.2px;height:11px;background:#6b95f2;"></div>
<div class="a" style="left:1340px;top:54px;width:2px;height:121px;background:#c8dcff;"></div>
<div class="a" style="left:1552px;top:54px;width:2px;height:121px;background:#f2b0a8;"></div>
<div class="a" style="left:1308px;top:14px;width:4px;height:161px;background:#3a7fc1;"></div>
<div class="a" style="left:1308px;top:14.5px;width:10px;height:36.5px;background:#1f4a78;border:2px solid #3a7fc1;border-radius:0 6px 6px 0;"></div>
<div class="a" style="left:1310.5px;top:24px;width:2px;height:16px;background:#c8dcff;"></div>
<div class="a" style="left:2912px;top:14px;width:4px;height:161px;background:#3a7fc1;"></div>
<div class="a" style="left:2907px;top:14.5px;width:12px;height:36.5px;background:#1f4a78;border:2px solid #3a7fc1;border-radius:6px 0 0 6px;"></div>
<div class="a" style="left:2912px;top:24px;width:2px;height:16px;background:#c8dcff;"></div>
<div class="a" style="left:1308px;top:174px;width:1608px;height:2px;background:#5d5d5d;"></div>
<div class="a" style="left:1308px;top:176px;width:246px;height:53px;background:#28292b;"></div>
<div class="a" style="left:1308px;top:228px;width:246px;height:2px;background:#5d5d5d;"></div>
<div class="t" style="left:1319.3px;top:193.0px;font-size:23.5px;color:#e3e3e3;letter-spacing:1.23px;">Name</div>
<div class="a" style="left:1554px;top:176px;width:2px;height:1054px;background:#5d5d5d;"></div>
<div class="a" style="left:1308px;top:230px;width:246px;height:42px;background:#28292b;"></div>
<svg class="a" style="left:1318.0px;top:241.0px" width="28" height="21" viewBox="0 0 28 21"><path d="M 8.2 1.3 L 6.4 1.3 Q 4.4 1.3 4.4 3.3 L 4.4 7.6 Q 4.4 9.9 1.6 9.9 Q 4.4 9.9 4.4 12.2 L 4.4 16.5 Q 4.4 18.5 6.4 18.5 L 8.2 18.5" fill="none" stroke="#f3925a" stroke-width="2.6" /><path d="M 8.2 1.3 L 6.4 1.3 Q 4.4 1.3 4.4 3.3 L 4.4 7.6 Q 4.4 9.9 1.6 9.9 Q 4.4 9.9 4.4 12.2 L 4.4 16.5 Q 4.4 18.5 6.4 18.5 L 8.2 18.5" fill="none" stroke="#f3925a" stroke-width="2.6" transform="translate(27.4,0) scale(-1,1)"/><circle cx="14.1" cy="5.4" r="1.5" fill="#f3925a"/><path d="M14.4 8.6 L12.7 16.4" stroke="#f3925a" stroke-width="2.5"/></svg>
<div class="t" style="left:1354.7px;top:240.7px;font-size:23.5px;color:#e3e3e3;letter-spacing:1.00px;">gen_204?csp_...</div>
<div class="a" style="left:1308px;top:272px;width:246px;height:42px;background:#1f1f1f;"></div>
<svg class="a" style="left:1320.0px;top:281.5px" width="24" height="23" viewBox="0 0 24 23"><path d="M2.2 1.4 L14.5 1.4 L21.8 8.7 L21.8 21 L2.2 21 Z" fill="none" stroke="#c7c7c7" stroke-width="2.4" stroke-linejoin="round"/><path d="M14.5 1.4 L14.5 8.7 L21.8 8.7 Z" fill="#c7c7c7"/></svg>
<div class="t" style="left:1354.7px;top:282.7px;font-size:23.5px;color:#e3e3e3;letter-spacing:0.79px;">wa/?medium=f...</div>
<div class="a" style="left:1308px;top:314px;width:246px;height:42px;background:#28292b;"></div>
<svg class="a" style="left:1318.0px;top:325.0px" width="28" height="21" viewBox="0 0 28 21"><path d="M 8.2 1.3 L 6.4 1.3 Q 4.4 1.3 4.4 3.3 L 4.4 7.6 Q 4.4 9.9 1.6 9.9 Q 4.4 9.9 4.4 12.2 L 4.4 16.5 Q 4.4 18.5 6.4 18.5 L 8.2 18.5" fill="none" stroke="#f3925a" stroke-width="2.6" /><path d="M 8.2 1.3 L 6.4 1.3 Q 4.4 1.3 4.4 3.3 L 4.4 7.6 Q 4.4 9.9 1.6 9.9 Q 4.4 9.9 4.4 12.2 L 4.4 16.5 Q 4.4 18.5 6.4 18.5 L 8.2 18.5" fill="none" stroke="#f3925a" stroke-width="2.6" transform="translate(27.4,0) scale(-1,1)"/><circle cx="14.1" cy="5.4" r="1.5" fill="#f3925a"/><path d="M14.4 8.6 L12.7 16.4" stroke="#f3925a" stroke-width="2.5"/></svg>
<div class="t" style="left:1354.7px;top:324.7px;font-size:23.5px;color:#e3e3e3;letter-spacing:1.15px;">attribution_trig...</div>
<div class="a" style="left:1308px;top:356px;width:246px;height:42px;background:#1f1f1f;"></div>
<svg class="a" style="left:1318.0px;top:367.0px" width="28" height="21" viewBox="0 0 28 21"><path d="M 8.2 1.3 L 6.4 1.3 Q 4.4 1.3 4.4 3.3 L 4.4 7.6 Q 4.4 9.9 1.6 9.9 Q 4.4 9.9 4.4 12.2 L 4.4 16.5 Q 4.4 18.5 6.4 18.5 L 8.2 18.5" fill="none" stroke="#f3925a" stroke-width="2.6" /><path d="M 8.2 1.3 L 6.4 1.3 Q 4.4 1.3 4.4 3.3 L 4.4 7.6 Q 4.4 9.9 1.6 9.9 Q 4.4 9.9 4.4 12.2 L 4.4 16.5 Q 4.4 18.5 6.4 18.5 L 8.2 18.5" fill="none" stroke="#f3925a" stroke-width="2.6" transform="translate(27.4,0) scale(-1,1)"/><circle cx="14.1" cy="5.4" r="1.5" fill="#f3925a"/><path d="M14.4 8.6 L12.7 16.4" stroke="#f3925a" stroke-width="2.5"/></svg>
<div class="t" style="left:1354.7px;top:366.7px;font-size:23.5px;color:#e3e3e3;letter-spacing:1.19px;">eng?orgId=387</div>
<div class="a" style="left:1308px;top:398px;width:246px;height:42px;background:#28292b;"></div>
<svg class="a" style="left:1319.0px;top:407.0px" width="24" height="24" viewBox="0 0 24 24"><rect x="1.5" y="1.5" width="21" height="21" rx="1.5" fill="none" stroke="#f09a5a" stroke-width="2"/><path d="M10 8.5 L6.5 12 L10 15.5 M14 8.5 L17.5 12 L14 15.5" fill="none" stroke="#f09a5a" stroke-width="1.8"/></svg>
<div class="t" style="left:1354.7px;top:408.7px;font-size:23.5px;color:#e3e3e3;letter-spacing:1.08px;">collect?v=2&amp;ti...</div>
<div class="a" style="left:1308px;top:440px;width:246px;height:42px;background:#1f1f1f;"></div>
<svg class="a" style="left:1318.0px;top:448.0px" width="26" height="26" viewBox="0 0 26 26"><circle cx="13" cy="13" r="12.5" fill="#e46962"/><path d="M8 8 L18 18 M18 8 L8 18" stroke="#2a1a1a" stroke-width="2.2"/></svg>
<div class="t" style="left:1354.7px;top:450.7px;font-size:23.5px;color:#f2b8b5;letter-spacing:0.86px;">track_request?...</div>
<div class="a" style="left:1308px;top:482px;width:246px;height:42px;background:#28292b;"></div>
<svg class="a" style="left:1319.0px;top:491.0px" width="24" height="24" viewBox="0 0 24 24"><rect x="1.5" y="1.5" width="21" height="21" rx="1.5" fill="none" stroke="#f09a5a" stroke-width="2"/><path d="M10 8.5 L6.5 12 L10 15.5 M14 8.5 L17.5 12 L14 15.5" fill="none" stroke="#f09a5a" stroke-width="1.8"/></svg>
<div class="t" style="left:1354.7px;top:492.7px;font-size:23.5px;color:#e3e3e3;letter-spacing:1.08px;">collect?v=2&amp;ti...</div>
<div class="a" style="left:1308px;top:524px;width:246px;height:42px;background:#1f1f1f;"></div>
<svg class="a" style="left:1318.0px;top:535.0px" width="28" height="21" viewBox="0 0 28 21"><path d="M 8.2 1.3 L 6.4 1.3 Q 4.4 1.3 4.4 3.3 L 4.4 7.6 Q 4.4 9.9 1.6 9.9 Q 4.4 9.9 4.4 12.2 L 4.4 16.5 Q 4.4 18.5 6.4 18.5 L 8.2 18.5" fill="none" stroke="#f3925a" stroke-width="2.6" /><path d="M 8.2 1.3 L 6.4 1.3 Q 4.4 1.3 4.4 3.3 L 4.4 7.6 Q 4.4 9.9 1.6 9.9 Q 4.4 9.9 4.4 12.2 L 4.4 16.5 Q 4.4 18.5 6.4 18.5 L 8.2 18.5" fill="none" stroke="#f3925a" stroke-width="2.6" transform="translate(27.4,0) scale(-1,1)"/><circle cx="14.1" cy="5.4" r="1.5" fill="#f3925a"/><path d="M14.4 8.6 L12.7 16.4" stroke="#f3925a" stroke-width="2.5"/></svg>
<div class="t" style="left:1354.7px;top:534.7px;font-size:23.5px;color:#e3e3e3;letter-spacing:2.45px;">387</div>
<div class="a" style="left:1308px;top:566px;width:246px;height:42px;background:#28292b;"></div>
<svg class="a" style="left:1318.0px;top:577.0px" width="28" height="21" viewBox="0 0 28 21"><path d="M 8.2 1.3 L 6.4 1.3 Q 4.4 1.3 4.4 3.3 L 4.4 7.6 Q 4.4 9.9 1.6 9.9 Q 4.4 9.9 4.4 12.2 L 4.4 16.5 Q 4.4 18.5 6.4 18.5 L 8.2 18.5" fill="none" stroke="#f3925a" stroke-width="2.6" /><path d="M 8.2 1.3 L 6.4 1.3 Q 4.4 1.3 4.4 3.3 L 4.4 7.6 Q 4.4 9.9 1.6 9.9 Q 4.4 9.9 4.4 12.2 L 4.4 16.5 Q 4.4 18.5 6.4 18.5 L 8.2 18.5" fill="none" stroke="#f3925a" stroke-width="2.6" transform="translate(27.4,0) scale(-1,1)"/><circle cx="14.1" cy="5.4" r="1.5" fill="#f3925a"/><path d="M14.4 8.6 L12.7 16.4" stroke="#f3925a" stroke-width="2.5"/></svg>
<div class="t" style="left:1354.7px;top:576.7px;font-size:23.5px;color:#e3e3e3;letter-spacing:1.30px;">Health</div>
<div class="a" style="left:1308px;top:608px;width:246px;height:42px;background:#1f1f1f;"></div>
<svg class="a" style="left:1318.0px;top:619.0px" width="28" height="21" viewBox="0 0 28 21"><path d="M 8.2 1.3 L 6.4 1.3 Q 4.4 1.3 4.4 3.3 L 4.4 7.6 Q 4.4 9.9 1.6 9.9 Q 4.4 9.9 4.4 12.2 L 4.4 16.5 Q 4.4 18.5 6.4 18.5 L 8.2 18.5" fill="none" stroke="#f3925a" stroke-width="2.6" /><path d="M 8.2 1.3 L 6.4 1.3 Q 4.4 1.3 4.4 3.3 L 4.4 7.6 Q 4.4 9.9 1.6 9.9 Q 4.4 9.9 4.4 12.2 L 4.4 16.5 Q 4.4 18.5 6.4 18.5 L 8.2 18.5" fill="none" stroke="#f3925a" stroke-width="2.6" transform="translate(27.4,0) scale(-1,1)"/><circle cx="14.1" cy="5.4" r="1.5" fill="#f3925a"/><path d="M14.4 8.6 L12.7 16.4" stroke="#f3925a" stroke-width="2.5"/></svg>
<div class="t" style="left:1354.7px;top:618.7px;font-size:23.5px;color:#e3e3e3;letter-spacing:1.07px;">package-featu...</div>
<div class="a" style="left:1308px;top:650px;width:246px;height:42px;background:#28292b;"></div>
<svg class="a" style="left:1318.0px;top:661.0px" width="28" height="21" viewBox="0 0 28 21"><path d="M 8.2 1.3 L 6.4 1.3 Q 4.4 1.3 4.4 3.3 L 4.4 7.6 Q 4.4 9.9 1.6 9.9 Q 4.4 9.9 4.4 12.2 L 4.4 16.5 Q 4.4 18.5 6.4 18.5 L 8.2 18.5" fill="none" stroke="#f3925a" stroke-width="2.6" /><path d="M 8.2 1.3 L 6.4 1.3 Q 4.4 1.3 4.4 3.3 L 4.4 7.6 Q 4.4 9.9 1.6 9.9 Q 4.4 9.9 4.4 12.2 L 4.4 16.5 Q 4.4 18.5 6.4 18.5 L 8.2 18.5" fill="none" stroke="#f3925a" stroke-width="2.6" transform="translate(27.4,0) scale(-1,1)"/><circle cx="14.1" cy="5.4" r="1.5" fill="#f3925a"/><path d="M14.4 8.6 L12.7 16.4" stroke="#f3925a" stroke-width="2.5"/></svg>
<div class="t" style="left:1354.7px;top:660.7px;font-size:23.5px;color:#e3e3e3;letter-spacing:1.38px;">Modules</div>
<div class="a" style="left:1308px;top:692px;width:246px;height:42px;background:#454746;"></div>
<svg class="a" style="left:1318.0px;top:703.0px" width="28" height="21" viewBox="0 0 28 21"><path d="M 8.2 1.3 L 6.4 1.3 Q 4.4 1.3 4.4 3.3 L 4.4 7.6 Q 4.4 9.9 1.6 9.9 Q 4.4 9.9 4.4 12.2 L 4.4 16.5 Q 4.4 18.5 6.4 18.5 L 8.2 18.5" fill="none" stroke="#f3925a" stroke-width="2.6" /><path d="M 8.2 1.3 L 6.4 1.3 Q 4.4 1.3 4.4 3.3 L 4.4 7.6 Q 4.4 9.9 1.6 9.9 Q 4.4 9.9 4.4 12.2 L 4.4 16.5 Q 4.4 18.5 6.4 18.5 L 8.2 18.5" fill="none" stroke="#f3925a" stroke-width="2.6" transform="translate(27.4,0) scale(-1,1)"/><circle cx="14.1" cy="5.4" r="1.5" fill="#f3925a"/><path d="M14.4 8.6 L12.7 16.4" stroke="#f3925a" stroke-width="2.5"/></svg>
<div class="t" style="left:1354.7px;top:702.7px;font-size:23.5px;color:#e3e3e3;letter-spacing:1.57px;">1954</div>
<div class="a" style="left:1308px;top:734px;width:246px;height:42px;background:#28292b;"></div>
<svg class="a" style="left:1318.0px;top:745.0px" width="28" height="21" viewBox="0 0 28 21"><path d="M 8.2 1.3 L 6.4 1.3 Q 4.4 1.3 4.4 3.3 L 4.4 7.6 Q 4.4 9.9 1.6 9.9 Q 4.4 9.9 4.4 12.2 L 4.4 16.5 Q 4.4 18.5 6.4 18.5 L 8.2 18.5" fill="none" stroke="#f3925a" stroke-width="2.6" /><path d="M 8.2 1.3 L 6.4 1.3 Q 4.4 1.3 4.4 3.3 L 4.4 7.6 Q 4.4 9.9 1.6 9.9 Q 4.4 9.9 4.4 12.2 L 4.4 16.5 Q 4.4 18.5 6.4 18.5 L 8.2 18.5" fill="none" stroke="#f3925a" stroke-width="2.6" transform="translate(27.4,0) scale(-1,1)"/><circle cx="14.1" cy="5.4" r="1.5" fill="#f3925a"/><path d="M14.4 8.6 L12.7 16.4" stroke="#f3925a" stroke-width="2.5"/></svg>
<div class="t" style="left:1354.7px;top:744.7px;font-size:23.5px;color:#e3e3e3;letter-spacing:1.57px;">1954</div>
<div class="a" style="left:1308px;top:776px;width:246px;height:42px;background:#1f1f1f;"></div>
<svg class="a" style="left:1318.0px;top:787.0px" width="28" height="21" viewBox="0 0 28 21"><path d="M 8.2 1.3 L 6.4 1.3 Q 4.4 1.3 4.4 3.3 L 4.4 7.6 Q 4.4 9.9 1.6 9.9 Q 4.4 9.9 4.4 12.2 L 4.4 16.5 Q 4.4 18.5 6.4 18.5 L 8.2 18.5" fill="none" stroke="#f3925a" stroke-width="2.6" /><path d="M 8.2 1.3 L 6.4 1.3 Q 4.4 1.3 4.4 3.3 L 4.4 7.6 Q 4.4 9.9 1.6 9.9 Q 4.4 9.9 4.4 12.2 L 4.4 16.5 Q 4.4 18.5 6.4 18.5 L 8.2 18.5" fill="none" stroke="#f3925a" stroke-width="2.6" transform="translate(27.4,0) scale(-1,1)"/><circle cx="14.1" cy="5.4" r="1.5" fill="#f3925a"/><path d="M14.4 8.6 L12.7 16.4" stroke="#f3925a" stroke-width="2.5"/></svg>
<div class="t" style="left:1354.7px;top:786.7px;font-size:23.5px;color:#e3e3e3;letter-spacing:2.45px;">387</div>
<div class="a" style="left:1308px;top:818px;width:246px;height:42px;background:#28292b;"></div>
<svg class="a" style="left:1318.0px;top:829.0px" width="28" height="21" viewBox="0 0 28 21"><path d="M 8.2 1.3 L 6.4 1.3 Q 4.4 1.3 4.4 3.3 L 4.4 7.6 Q 4.4 9.9 1.6 9.9 Q 4.4 9.9 4.4 12.2 L 4.4 16.5 Q 4.4 18.5 6.4 18.5 L 8.2 18.5" fill="none" stroke="#f3925a" stroke-width="2.6" /><path d="M 8.2 1.3 L 6.4 1.3 Q 4.4 1.3 4.4 3.3 L 4.4 7.6 Q 4.4 9.9 1.6 9.9 Q 4.4 9.9 4.4 12.2 L 4.4 16.5 Q 4.4 18.5 6.4 18.5 L 8.2 18.5" fill="none" stroke="#f3925a" stroke-width="2.6" transform="translate(27.4,0) scale(-1,1)"/><circle cx="14.1" cy="5.4" r="1.5" fill="#f3925a"/><path d="M14.4 8.6 L12.7 16.4" stroke="#f3925a" stroke-width="2.5"/></svg>
<div class="t" style="left:1354.7px;top:828.7px;font-size:23.5px;color:#e3e3e3;letter-spacing:0.96px;">Languages</div>
<div class="a" style="left:1308px;top:860px;width:246px;height:42px;background:#1f1f1f;"></div>
<svg class="a" style="left:1318.0px;top:871.0px" width="28" height="21" viewBox="0 0 28 21"><path d="M 8.2 1.3 L 6.4 1.3 Q 4.4 1.3 4.4 3.3 L 4.4 7.6 Q 4.4 9.9 1.6 9.9 Q 4.4 9.9 4.4 12.2 L 4.4 16.5 Q 4.4 18.5 6.4 18.5 L 8.2 18.5" fill="none" stroke="#f3925a" stroke-width="2.6" /><path d="M 8.2 1.3 L 6.4 1.3 Q 4.4 1.3 4.4 3.3 L 4.4 7.6 Q 4.4 9.9 1.6 9.9 Q 4.4 9.9 4.4 12.2 L 4.4 16.5 Q 4.4 18.5 6.4 18.5 L 8.2 18.5" fill="none" stroke="#f3925a" stroke-width="2.6" transform="translate(27.4,0) scale(-1,1)"/><circle cx="14.1" cy="5.4" r="1.5" fill="#f3925a"/><path d="M14.4 8.6 L12.7 16.4" stroke="#f3925a" stroke-width="2.5"/></svg>
<div class="t" style="left:1354.7px;top:870.7px;font-size:23.5px;color:#e3e3e3;letter-spacing:1.07px;">IncidentCount...</div>
<div class="a" style="left:1308px;top:902px;width:246px;height:42px;background:#28292b;"></div>
<svg class="a" style="left:1318.0px;top:913.0px" width="28" height="21" viewBox="0 0 28 21"><path d="M 8.2 1.3 L 6.4 1.3 Q 4.4 1.3 4.4 3.3 L 4.4 7.6 Q 4.4 9.9 1.6 9.9 Q 4.4 9.9 4.4 12.2 L 4.4 16.5 Q 4.4 18.5 6.4 18.5 L 8.2 18.5" fill="none" stroke="#f3925a" stroke-width="2.6" /><path d="M 8.2 1.3 L 6.4 1.3 Q 4.4 1.3 4.4 3.3 L 4.4 7.6 Q 4.4 9.9 1.6 9.9 Q 4.4 9.9 4.4 12.2 L 4.4 16.5 Q 4.4 18.5 6.4 18.5 L 8.2 18.5" fill="none" stroke="#f3925a" stroke-width="2.6" transform="translate(27.4,0) scale(-1,1)"/><circle cx="14.1" cy="5.4" r="1.5" fill="#f3925a"/><path d="M14.4 8.6 L12.7 16.4" stroke="#f3925a" stroke-width="2.5"/></svg>
<div class="t" style="left:1354.7px;top:912.7px;font-size:23.5px;color:#e3e3e3;letter-spacing:1.53px;">Dropdown</div>
<div class="a" style="left:1308px;top:944px;width:246px;height:42px;background:#1f1f1f;"></div>
<svg class="a" style="left:1318.0px;top:955.0px" width="28" height="21" viewBox="0 0 28 21"><path d="M 8.2 1.3 L 6.4 1.3 Q 4.4 1.3 4.4 3.3 L 4.4 7.6 Q 4.4 9.9 1.6 9.9 Q 4.4 9.9 4.4 12.2 L 4.4 16.5 Q 4.4 18.5 6.4 18.5 L 8.2 18.5" fill="none" stroke="#f3925a" stroke-width="2.6" /><path d="M 8.2 1.3 L 6.4 1.3 Q 4.4 1.3 4.4 3.3 L 4.4 7.6 Q 4.4 9.9 1.6 9.9 Q 4.4 9.9 4.4 12.2 L 4.4 16.5 Q 4.4 18.5 6.4 18.5 L 8.2 18.5" fill="none" stroke="#f3925a" stroke-width="2.6" transform="translate(27.4,0) scale(-1,1)"/><circle cx="14.1" cy="5.4" r="1.5" fill="#f3925a"/><path d="M14.4 8.6 L12.7 16.4" stroke="#f3925a" stroke-width="2.5"/></svg>
<div class="t" style="left:1354.7px;top:954.7px;font-size:23.5px;color:#e3e3e3;letter-spacing:1.38px;">Modules</div>
<div class="a" style="left:1308px;top:986px;width:246px;height:42px;background:#28292b;"></div>
<svg class="a" style="left:1318.0px;top:997.0px" width="28" height="21" viewBox="0 0 28 21"><path d="M 8.2 1.3 L 6.4 1.3 Q 4.4 1.3 4.4 3.3 L 4.4 7.6 Q 4.4 9.9 1.6 9.9 Q 4.4 9.9 4.4 12.2 L 4.4 16.5 Q 4.4 18.5 6.4 18.5 L 8.2 18.5" fill="none" stroke="#f3925a" stroke-width="2.6" /><path d="M 8.2 1.3 L 6.4 1.3 Q 4.4 1.3 4.4 3.3 L 4.4 7.6 Q 4.4 9.9 1.6 9.9 Q 4.4 9.9 4.4 12.2 L 4.4 16.5 Q 4.4 18.5 6.4 18.5 L 8.2 18.5" fill="none" stroke="#f3925a" stroke-width="2.6" transform="translate(27.4,0) scale(-1,1)"/><circle cx="14.1" cy="5.4" r="1.5" fill="#f3925a"/><path d="M14.4 8.6 L12.7 16.4" stroke="#f3925a" stroke-width="2.5"/></svg>
<div class="t" style="left:1354.7px;top:996.7px;font-size:23.5px;color:#e3e3e3;letter-spacing:1.00px;">IncidentStatus...</div>
<div class="a" style="left:1308px;top:1028px;width:246px;height:42px;background:#1f1f1f;"></div>
<svg class="a" style="left:1318.0px;top:1039.0px" width="28" height="21" viewBox="0 0 28 21"><path d="M 8.2 1.3 L 6.4 1.3 Q 4.4 1.3 4.4 3.3 L 4.4 7.6 Q 4.4 9.9 1.6 9.9 Q 4.4 9.9 4.4 12.2 L 4.4 16.5 Q 4.4 18.5 6.4 18.5 L 8.2 18.5" fill="none" stroke="#f3925a" stroke-width="2.6" /><path d="M 8.2 1.3 L 6.4 1.3 Q 4.4 1.3 4.4 3.3 L 4.4 7.6 Q 4.4 9.9 1.6 9.9 Q 4.4 9.9 4.4 12.2 L 4.4 16.5 Q 4.4 18.5 6.4 18.5 L 8.2 18.5" fill="none" stroke="#f3925a" stroke-width="2.6" transform="translate(27.4,0) scale(-1,1)"/><circle cx="14.1" cy="5.4" r="1.5" fill="#f3925a"/><path d="M14.4 8.6 L12.7 16.4" stroke="#f3925a" stroke-width="2.5"/></svg>
<div class="t" style="left:1354.7px;top:1038.7px;font-size:23.5px;color:#e3e3e3;letter-spacing:2.45px;">387</div>
<div class="a" style="left:1308px;top:1070px;width:246px;height:42px;background:#28292b;"></div>
<svg class="a" style="left:1318.0px;top:1081.0px" width="28" height="21" viewBox="0 0 28 21"><path d="M 8.2 1.3 L 6.4 1.3 Q 4.4 1.3 4.4 3.3 L 4.4 7.6 Q 4.4 9.9 1.6 9.9 Q 4.4 9.9 4.4 12.2 L 4.4 16.5 Q 4.4 18.5 6.4 18.5 L 8.2 18.5" fill="none" stroke="#f3925a" stroke-width="2.6" /><path d="M 8.2 1.3 L 6.4 1.3 Q 4.4 1.3 4.4 3.3 L 4.4 7.6 Q 4.4 9.9 1.6 9.9 Q 4.4 9.9 4.4 12.2 L 4.4 16.5 Q 4.4 18.5 6.4 18.5 L 8.2 18.5" fill="none" stroke="#f3925a" stroke-width="2.6" transform="translate(27.4,0) scale(-1,1)"/><circle cx="14.1" cy="5.4" r="1.5" fill="#f3925a"/><path d="M14.4 8.6 L12.7 16.4" stroke="#f3925a" stroke-width="2.5"/></svg>
<div class="t" style="left:1354.7px;top:1080.7px;font-size:23.5px;color:#e3e3e3;letter-spacing:1.07px;">IncidentCount...</div>
<div class="a" style="left:1308px;top:1112px;width:246px;height:42px;background:#1f1f1f;"></div>
<svg class="a" style="left:1318.0px;top:1123.0px" width="28" height="21" viewBox="0 0 28 21"><path d="M 8.2 1.3 L 6.4 1.3 Q 4.4 1.3 4.4 3.3 L 4.4 7.6 Q 4.4 9.9 1.6 9.9 Q 4.4 9.9 4.4 12.2 L 4.4 16.5 Q 4.4 18.5 6.4 18.5 L 8.2 18.5" fill="none" stroke="#f3925a" stroke-width="2.6" /><path d="M 8.2 1.3 L 6.4 1.3 Q 4.4 1.3 4.4 3.3 L 4.4 7.6 Q 4.4 9.9 1.6 9.9 Q 4.4 9.9 4.4 12.2 L 4.4 16.5 Q 4.4 18.5 6.4 18.5 L 8.2 18.5" fill="none" stroke="#f3925a" stroke-width="2.6" transform="translate(27.4,0) scale(-1,1)"/><circle cx="14.1" cy="5.4" r="1.5" fill="#f3925a"/><path d="M14.4 8.6 L12.7 16.4" stroke="#f3925a" stroke-width="2.5"/></svg>
<div class="t" style="left:1354.7px;top:1122.7px;font-size:23.5px;color:#e3e3e3;letter-spacing:1.09px;">Dashboards</div>
<div class="a" style="left:1308px;top:1154px;width:246px;height:42px;background:#28292b;"></div>
<svg class="a" style="left:1318.0px;top:1165.0px" width="28" height="21" viewBox="0 0 28 21"><path d="M 8.2 1.3 L 6.4 1.3 Q 4.4 1.3 4.4 3.3 L 4.4 7.6 Q 4.4 9.9 1.6 9.9 Q 4.4 9.9 4.4 12.2 L 4.4 16.5 Q 4.4 18.5 6.4 18.5 L 8.2 18.5" fill="none" stroke="#f3925a" stroke-width="2.6" /><path d="M 8.2 1.3 L 6.4 1.3 Q 4.4 1.3 4.4 3.3 L 4.4 7.6 Q 4.4 9.9 1.6 9.9 Q 4.4 9.9 4.4 12.2 L 4.4 16.5 Q 4.4 18.5 6.4 18.5 L 8.2 18.5" fill="none" stroke="#f3925a" stroke-width="2.6" transform="translate(27.4,0) scale(-1,1)"/><circle cx="14.1" cy="5.4" r="1.5" fill="#f3925a"/><path d="M14.4 8.6 L12.7 16.4" stroke="#f3925a" stroke-width="2.5"/></svg>
<div class="t" style="left:1354.7px;top:1164.7px;font-size:23.5px;color:#e3e3e3;letter-spacing:0.84px;">OrganisationSt...</div>
<div class="a" style="left:1308px;top:1196px;width:246px;height:42px;background:#1f1f1f;"></div>
<svg class="a" style="left:1318.0px;top:1207.0px" width="28" height="21" viewBox="0 0 28 21"><path d="M 8.2 1.3 L 6.4 1.3 Q 4.4 1.3 4.4 3.3 L 4.4 7.6 Q 4.4 9.9 1.6 9.9 Q 4.4 9.9 4.4 12.2 L 4.4 16.5 Q 4.4 18.5 6.4 18.5 L 8.2 18.5" fill="none" stroke="#f3925a" stroke-width="2.6" /><path d="M 8.2 1.3 L 6.4 1.3 Q 4.4 1.3 4.4 3.3 L 4.4 7.6 Q 4.4 9.9 1.6 9.9 Q 4.4 9.9 4.4 12.2 L 4.4 16.5 Q 4.4 18.5 6.4 18.5 L 8.2 18.5" fill="none" stroke="#f3925a" stroke-width="2.6" transform="translate(27.4,0) scale(-1,1)"/><circle cx="14.1" cy="5.4" r="1.5" fill="#f3925a"/><path d="M14.4 8.6 L12.7 16.4" stroke="#f3925a" stroke-width="2.5"/></svg>
<div class="t" style="left:1354.7px;top:1206.7px;font-size:23.5px;color:#e3e3e3;letter-spacing:0.81px;">EscalatedIncid...</div>
<div class="a" style="left:1556px;top:176px;width:1360px;height:52px;background:#3c3c3c;"></div>
<div class="a" style="left:1556px;top:228px;width:1360px;height:2px;background:#5d5d5d;"></div>
<svg class="a" style="left:1584.0px;top:191.0px" width="24" height="24" viewBox="0 0 24 24"><path d="M3 3 L21 21 M21 3 L3 21" stroke="#c7c7c7" stroke-width="2.4"/></svg>
<div class="t" style="left:1649.2px;top:195.1px;font-size:23.5px;color:#c7c7c7;-webkit-text-stroke:0.3px #c7c7c7;letter-spacing:1.50px;">Headers</div>
<div class="t" style="left:1787.3px;top:195.1px;font-size:23.5px;color:#a8c7fa;-webkit-text-stroke:0.3px #a8c7fa;letter-spacing:1.18px;">Preview</div>
<div class="t" style="left:1919.2px;top:195.1px;font-size:23.5px;color:#c7c7c7;-webkit-text-stroke:0.3px #c7c7c7;letter-spacing:1.17px;">Response</div>
<div class="t" style="left:2072.6px;top:195.1px;font-size:23.5px;color:#c7c7c7;-webkit-text-stroke:0.3px #c7c7c7;letter-spacing:1.69px;">Initiator</div>
<div class="t" style="left:2202.4px;top:195.1px;font-size:23.5px;color:#c7c7c7;-webkit-text-stroke:0.3px #c7c7c7;letter-spacing:1.92px;">Timing</div>
<div class="a" style="left:1765.7px;top:224.5px;width:133px;height:4.5px;background:#a8c7fa;border-radius:4px 4px 0 0;"></div>
<div class="a" style="left:1556px;top:230px;width:1360px;height:1000px;overflow:hidden;">
<div class="mono" style="left:108.0px;top:-14.0px;font-size:22.1px;"><span style="color:#8ab4f8">48</span>: {Id: 31867, AcmModuleId: 11, AcmModuleName: "Appointments", Read: 0, Create: 0, Update: 0}</div>
<svg class="a" style="left:87.0px;top:-11.1px" width="10" height="17" viewBox="0 0 10 17"><path d="M1 1 L9.5 8.5 L1 16 Z" fill="#c7c7c7"/></svg>
<div class="mono" style="left:108.0px;top:18.0px;font-size:22.1px;"><span style="color:#8ab4f8">49</span>: {Id: 32688, AcmModuleId: 57, AcmModuleName: "IoT Device Types", Read: 0, Create: 0, Update: 0}</div>
<svg class="a" style="left:87.0px;top:20.9px" width="10" height="17" viewBox="0 0 10 17"><path d="M1 1 L9.5 8.5 L1 16 Z" fill="#c7c7c7"/></svg>
<div class="mono" style="left:108.0px;top:50.0px;font-size:22.1px;"><span style="color:#8ab4f8">50</span>: {Id: 33430, AcmModuleId: 62, AcmModuleName: "Training register", Read: 0, Create: 0, Update: 0}</div>
<svg class="a" style="left:83.5px;top:56.9px" width="17" height="10" viewBox="0 0 17 10"><path d="M0.5 1 L16 1 L8.25 9 Z" fill="#c7c7c7"/></svg>
<div class="mono" style="left:132.4px;top:82.0px;font-size:22.1px;"><span style="color:#8ab4f8">AcmModuleId</span>: <span style="color:#a08af8">62</span></div>
<div class="mono" style="left:132.4px;top:114.0px;font-size:22.1px;"><span style="color:#8ab4f8">AcmModuleName</span>: <span style="color:#5cd5fb">"Training register"</span></div>
<div class="mono" style="left:132.4px;top:146.0px;font-size:22.1px;"><span style="color:#8ab4f8">Create</span>: <span style="color:#a08af8">0</span></div>
<div class="mono" style="left:132.4px;top:178.0px;font-size:22.1px;"><span style="color:#8ab4f8">Id</span>: <span style="color:#a08af8">33430</span></div>
<div class="mono" style="left:132.4px;top:210.0px;font-size:22.1px;"><span style="color:#8ab4f8">Read</span>: <span style="color:#a08af8">0</span></div>
<div class="mono" style="left:132.4px;top:242.0px;font-size:22.1px;"><span style="color:#8ab4f8">Update</span>: <span style="color:#a08af8">0</span></div>
<div class="mono" style="left:108.0px;top:274.0px;font-size:22.1px;"><span style="color:#8ab4f8">51</span>: {Id: 33994, AcmModuleId: 63, AcmModuleName: "My training", Read: 0, Create: 0, Update: 0}</div>
<svg class="a" style="left:83.5px;top:280.9px" width="17" height="10" viewBox="0 0 17 10"><path d="M0.5 1 L16 1 L8.25 9 Z" fill="#c7c7c7"/></svg>
<div class="mono" style="left:132.4px;top:306.0px;font-size:22.1px;"><span style="color:#8ab4f8">AcmModuleId</span>: <span style="color:#a08af8">63</span></div>
<div class="mono" style="left:132.4px;top:338.0px;font-size:22.1px;"><span style="color:#8ab4f8">AcmModuleName</span>: <span style="color:#5cd5fb">"My training"</span></div>
<div class="mono" style="left:132.4px;top:370.0px;font-size:22.1px;"><span style="color:#8ab4f8">Create</span>: <span style="color:#a08af8">0</span></div>
<div class="mono" style="left:132.4px;top:402.0px;font-size:22.1px;"><span style="color:#8ab4f8">Id</span>: <span style="color:#a08af8">33994</span></div>
<div class="mono" style="left:132.4px;top:434.0px;font-size:22.1px;"><span style="color:#8ab4f8">Read</span>: <span style="color:#a08af8">0</span></div>
<div class="mono" style="left:132.4px;top:466.0px;font-size:22.1px;"><span style="color:#8ab4f8">Update</span>: <span style="color:#a08af8">0</span></div>
<div class="mono" style="left:108.0px;top:498.0px;font-size:22.1px;"><span style="color:#8ab4f8">52</span>: {Id: 34558, AcmModuleId: 64, AcmModuleName: "TNI", Read: 0, Create: 0, Update: 0}</div>
<svg class="a" style="left:83.5px;top:504.9px" width="17" height="10" viewBox="0 0 17 10"><path d="M0.5 1 L16 1 L8.25 9 Z" fill="#c7c7c7"/></svg>
<div class="mono" style="left:132.4px;top:530.0px;font-size:22.1px;"><span style="color:#8ab4f8">AcmModuleId</span>: <span style="color:#a08af8">64</span></div>
<div class="mono" style="left:132.4px;top:562.0px;font-size:22.1px;"><span style="color:#8ab4f8">AcmModuleName</span>: <span style="color:#5cd5fb">"TNI"</span></div>
<div class="mono" style="left:132.4px;top:594.0px;font-size:22.1px;"><span style="color:#8ab4f8">Create</span>: <span style="color:#a08af8">0</span></div>
<div class="mono" style="left:132.4px;top:626.0px;font-size:22.1px;"><span style="color:#8ab4f8">Id</span>: <span style="color:#a08af8">34558</span></div>
<div class="mono" style="left:132.4px;top:658.0px;font-size:22.1px;"><span style="color:#8ab4f8">Read</span>: <span style="color:#a08af8">0</span></div>
<div class="mono" style="left:132.4px;top:690.0px;font-size:22.1px;"><span style="color:#8ab4f8">Update</span>: <span style="color:#a08af8">0</span></div>
<div class="mono" style="left:108.0px;top:722.0px;font-size:22.1px;"><span style="color:#8ab4f8">53</span>: {Id: 35122, AcmModuleId: 65, AcmModuleName: "Training report", Read: 0, Create: 0, Update: 0}</div>
<svg class="a" style="left:83.5px;top:728.9px" width="17" height="10" viewBox="0 0 17 10"><path d="M0.5 1 L16 1 L8.25 9 Z" fill="#c7c7c7"/></svg>
<div class="mono" style="left:132.4px;top:754.0px;font-size:22.1px;"><span style="color:#8ab4f8">AcmModuleId</span>: <span style="color:#a08af8">65</span></div>
<div class="mono" style="left:132.4px;top:786.0px;font-size:22.1px;"><span style="color:#8ab4f8">AcmModuleName</span>: <span style="color:#5cd5fb">"Training report"</span></div>
<div class="mono" style="left:132.4px;top:818.0px;font-size:22.1px;"><span style="color:#8ab4f8">Create</span>: <span style="color:#a08af8">0</span></div>
<div class="mono" style="left:132.4px;top:850.0px;font-size:22.1px;"><span style="color:#8ab4f8">Id</span>: <span style="color:#a08af8">35122</span></div>
<div class="mono" style="left:132.4px;top:882.0px;font-size:22.1px;"><span style="color:#8ab4f8">Read</span>: <span style="color:#a08af8">0</span></div>
<div class="mono" style="left:132.4px;top:914.0px;font-size:22.1px;"><span style="color:#8ab4f8">Update</span>: <span style="color:#a08af8">0</span></div>
<div class="mono" style="left:83.2px;top:946.0px;font-size:22.1px;"><span style="color:#8ab4f8">Name</span>: <span style="color:#5cd5fb">"Site EHS"</span></div>
<div class="mono" style="left:83.2px;top:978.0px;font-size:22.1px;"><span style="color:#8ab4f8">Status</span>: <span style="color:#5cd5fb">"Active"</span></div>
</div>
<div class="a" style="left:1602px;top:335px;width:5px;height:834.5px;background:#e5452c;"></div>
</body></html>
